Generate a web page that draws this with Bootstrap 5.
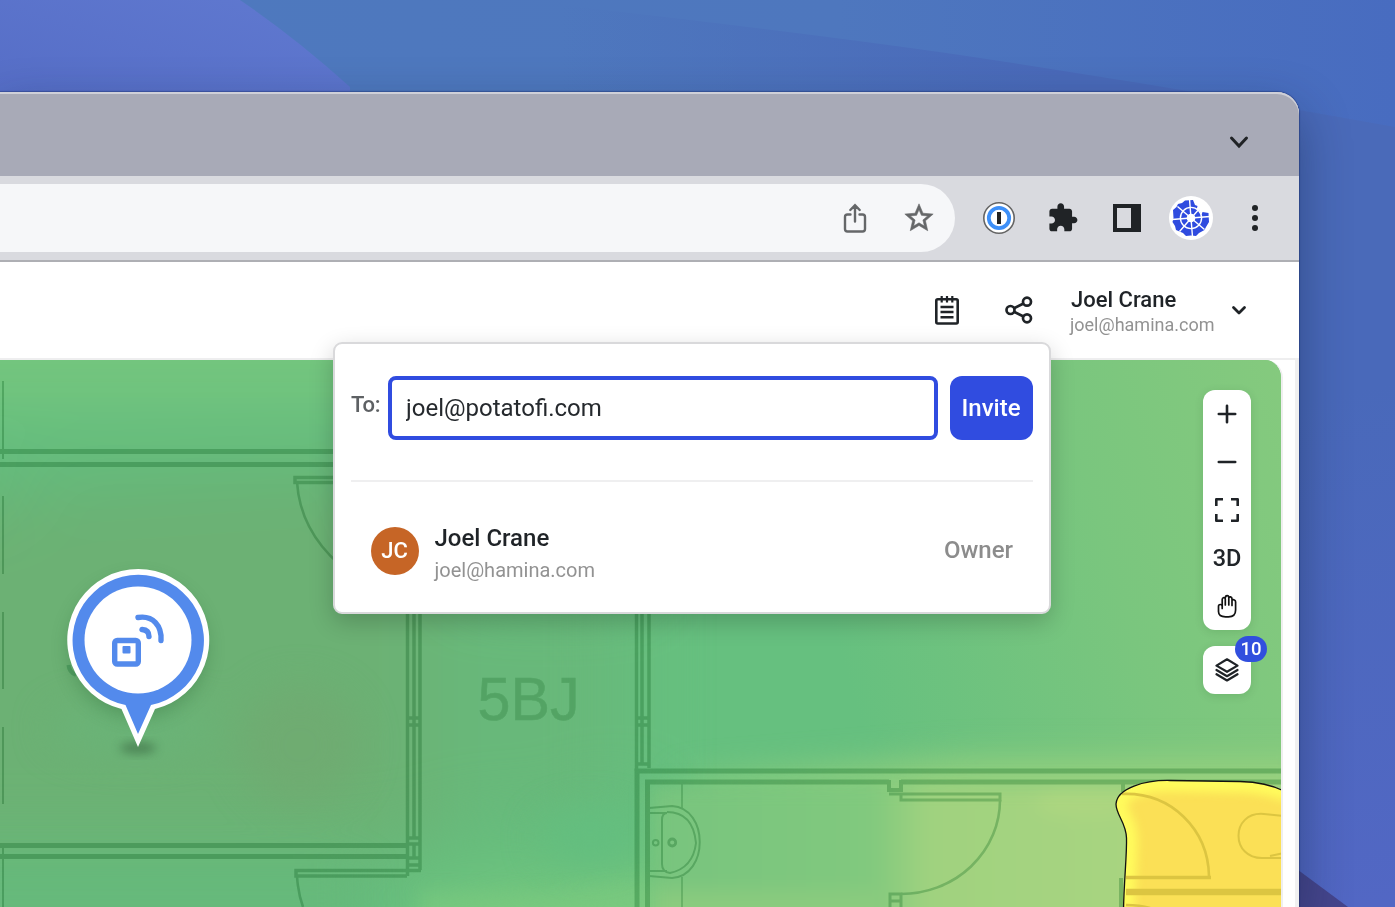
<!DOCTYPE html>
<html lang="en">
<head>
<meta charset="utf-8">
<meta name="viewport" content="width=device-width, initial-scale=1">
<title>Share project</title>
<link href="https://cdn.jsdelivr.net/npm/bootstrap@5.3.0/dist/css/bootstrap.min.css" rel="stylesheet">
<style>
body{font-family:Roboto,"Liberation Sans",sans-serif;color:#1f2327;width:1395px;height:907px;background:#4a69b9}
svg{display:block;flex:none}
filter{color-interpolation-filters:sRGB}
.wallpaper{z-index:0}
.browser{z-index:1;width:1299px;height:815px;margin-top:92px;border-top-right-radius:22px;background:#fff;box-shadow:0 0 1px 1px rgba(20,40,100,.4),0 20px 50px rgba(15,30,60,.42)}
.tabstrip{height:84px;background:#a8aab7;box-shadow:inset 0 2px 0 #cfd0d8;padding-right:38px;border-top-right-radius:22px;padding-top:16px}
.toolbar{height:86px;background:#d9dadf;border-bottom:2px solid #aeafb4;gap:20px;padding-right:22px}
.omnibox{height:68px;background:#f6f7f9;border-radius:0 34px 34px 0;gap:20px;padding-right:14px;margin-right:2px}
.slot{width:44px;height:44px}
.appbar{height:98px;border-bottom:2px solid #eeeeef;padding-right:52px}
.notes-icon{margin-right:46px}
.user-box{width:144px;margin-left:38px;margin-right:16px;padding-top:4px;white-space:nowrap}
.user-name{font-size:22px;line-height:26px;font-weight:500}
.user-mail{font-size:18px;line-height:24px;color:#929292;margin-left:-1px}
.workspace{height:547px}
.map{width:1283px;border-right:2px solid #efefef;border-top-right-radius:18px;background:#74c57e}
.gutter{width:4px;background:#f0f0f0;margin-top:-2px}
.tools{right:30px;top:30px}
.tool-stack{width:48px;border-radius:12px;box-shadow:0 2px 10px rgba(0,60,0,.12)}
.tool{width:48px;height:48px;font-size:23.5px;font-weight:500;padding:0}
.tool-3d{padding-top:2px}
.count{left:32px;top:-10px;width:32px;height:26px;font-size:18.5px;font-weight:500;background:#314fde;color:#fff;border-radius:13px;padding-top:1px}
.share-pop{z-index:5;left:333px;top:250px;width:718px;height:272px;border:2px solid #d9d9db;border-radius:9px;padding:32px 16px 0;box-shadow:0 8px 24px rgba(0,0,0,.2)}
.to-label{font-size:22px;font-weight:500;color:#5e6164;width:37px;line-height:58px;height:64px;letter-spacing:-.3px}
.invite-field{width:550px;height:64px;border:4px solid #304ce0;border-radius:8px;padding:0 14px;font-size:24px;color:#25292d}
.invite-field:focus{box-shadow:none;border-color:#304ce0}
.invite-btn{width:83px;height:64px;border-radius:12px;background:#304ce0;color:#fff;font-size:24px;font-weight:500;padding:0 1px 0 0;margin-left:12px}
.rule{height:2px;background:#efeff0;margin-top:40px}
.member{margin-top:38px;padding:0 20px}
.initials{width:48px;height:48px;background:#c66526;color:#fff;font-size:22px;font-weight:500;margin-top:7px;padding:0 1px 2px 0}
.member-text{margin-left:15.500px}
.member-name{font-size:24px;line-height:36px;font-weight:500}
.member-mail{font-size:20px;line-height:28px;color:#929292}
.member-role{font-size:24px;font-weight:500;color:#8c8c8c;line-height:36px;margin-top:12px}
.wall{fill:none;stroke:#b9d9c4;mix-blend-mode:multiply}
</style>
</head>
<body class="position-relative overflow-hidden m-0">
<svg class="wallpaper position-absolute top-0 start-0" width="1395" height="907" viewBox="0 0 1395 907">
  <defs>
    <linearGradient id="skyA" x1="0" y1="0" x2="1" y2="0"><stop offset="0" stop-color="#4e79be"/><stop offset=".6" stop-color="#4e77be"/><stop offset="1" stop-color="#486cc0"/></linearGradient>
    <linearGradient id="skyB" gradientUnits="userSpaceOnUse" x1="560" y1="0" x2="1060" y2="0"><stop offset="0" stop-color="#4a6ab9" stop-opacity="0"/><stop offset="1" stop-color="#4a6ab9"/></linearGradient>
    <linearGradient id="skyD" gradientUnits="userSpaceOnUse" x1="1300" y1="400" x2="1395" y2="900"><stop offset="0" stop-color="#4969ba"/><stop offset="1" stop-color="#5267c4"/></linearGradient>
    <linearGradient id="skyC" x1="0" y1="1" x2="1" y2="0"><stop offset="0" stop-color="#556dc6"/><stop offset="1" stop-color="#6079d0"/></linearGradient>
  </defs>
  <rect width="1395" height="907" fill="url(#skyA)"/>
  <path d="M560 5Q800 32 960 55Q1180 88 1395 127V300H560Z" fill="url(#skyB)"/>
  <rect x="1200" y="290" width="195" height="617" fill="url(#skyD)"/>
  <path d="M0 0H240Q296 38 350 87V110H0Z" fill="url(#skyC)"/>
  <path d="M1290 864L1348 907H1290Z" fill="#45458c"/>
</svg>

<main class="browser position-relative d-flex flex-column">
  <div class="tabstrip d-flex justify-content-end align-items-center">
    <div class="slot d-flex justify-content-center align-items-center">
      <svg width="20" height="14" viewBox="0 0 20 14" fill="none" stroke="#202326" stroke-width="3" stroke-linecap="round"><path d="M2.500 3L10 11L17.500 3"/></svg>
    </div>
  </div>

  <div class="toolbar d-flex align-items-center">
    <div class="omnibox flex-grow-1 d-flex align-items-center justify-content-end">
      <div class="slot d-flex justify-content-center align-items-center">
        <svg width="24" height="30" viewBox="0 0 24 30" fill="none" stroke="#656769" stroke-width="2.400" stroke-linecap="round"><path d="M7.500 11.500H4.500Q2 11.500 2 14V26Q2 28.500 4.500 28.500H19.500Q22 28.500 22 26V14Q22 11.500 19.500 11.500H16.500M12 18.500V2.500M7.300 7L12 2.300L16.700 7"/></svg>
      </div>
      <div class="slot d-flex justify-content-center align-items-center">
        <svg width="34" height="34" viewBox="0 0 24 24" fill="#656769" stroke="#656769" stroke-width=".4"><path d="M22 9.240l-7.190-.62L12 2 9.190 8.630 2 9.240l5.460 4.730L5.820 21 12 17.270 18.180 21l-1.630-7.030L22 9.240zM12 15.400l-3.760 2.270 1-4.280-3.320-2.880 4.380-.38L12 6.100l1.710 4.040 4.380.38-3.320 2.880 1 4.280L12 15.400z"/></svg>
      </div>
    </div>
    <div class="slot d-flex justify-content-center align-items-center">
      <svg width="32" height="32" viewBox="0 0 32 32"><circle cx="16" cy="16" r="15.200" fill="#fff" stroke="#646464" stroke-width="1.600"/><circle cx="16" cy="16" r="10.200" fill="#fff" stroke="#3d8ff8" stroke-width="3.800"/><rect x="14" y="10" width="4" height="12" fill="#222"/></svg>
    </div>
    <div class="slot d-flex justify-content-center align-items-center">
      <svg width="32" height="32" viewBox="0.200 0 24 24" fill="#202326"><path d="M20.500 11H19V7c0-1.100-.9-2-2-2h-4V3.500C13 2.120 11.880 1 10.500 1S8 2.120 8 3.500V5H4c-1.100 0-1.990.9-1.990 2v3.800H3.500c1.490 0 2.700 1.210 2.700 2.700s-1.210 2.700-2.700 2.700H2V20c0 1.100.9 2 2 2h3.800v-1.500c0-1.490 1.210-2.700 2.700-2.700 1.490 0 2.700 1.210 2.700 2.700V22H17c1.100 0 2-.9 2-2v-4h1.500c1.380 0 2.500-1.120 2.500-2.500S21.880 11 20.500 11z"/></svg>
    </div>
    <div class="slot d-flex justify-content-center align-items-center">
      <svg width="28" height="28" viewBox="0 0 28 28" fill="#202326" fill-rule="evenodd"><path d="M0 0H28V28H0ZM4 4V24H18V4Z"/></svg>
    </div>
    <div class="slot d-flex justify-content-center align-items-center">
      <svg width="44" height="44" viewBox="-22 -22 44 44">
        <circle r="22" fill="#fff"/>
        <path d="M2 -18L-6 -17.500L-9 -15L-13 -14L-14.500 -11L-18 -8L-17.500 0L-18.500 4L-16 8L-15 12L-8 15L-5 18L0 17.500L5 18L8 15L13.500 12L15 9L18 4L17.500 -5L11.500 -6L10.500 -3L8 -5L5.500 -8L6.500 -12L4 -13Z" fill="#2f4bdf"/>
        <circle r="10.800" fill="#2f4bdf"/>
        <g fill="none" stroke="#fff" stroke-width="1.400"><circle r="10.600"/><path d="M-1.500 -19L1.500 19M-19 1.500L19 -1.500M-13.500 -11.500L13.500 11.500M-11.500 13.500L9 -10"/></g>
        <circle r="4.300" fill="#fff"/>
      </svg>
    </div>
    <div class="slot d-flex justify-content-center align-items-center">
      <svg width="6" height="26" viewBox="0 0 6 26" fill="#202326"><circle cx="3" cy="3" r="3"/><circle cx="3" cy="13" r="3"/><circle cx="3" cy="23" r="3"/></svg>
    </div>
  </div>

  <header class="appbar d-flex align-items-center justify-content-end">
    <svg class="notes-icon" width="24" height="30" viewBox="0 0 24 30" fill="none" stroke="#1f2327" stroke-width="2.600"><rect x="1.300" y="4.300" width="21.400" height="24.200" rx="1.500"/><path d="M6.700 1V7.500M12 1V7.500M17.300 1V7.500" stroke-width="2.200"/><path d="M5.500 12H18.500M5.500 17H18.500M5.500 22.200H18.500" stroke-width="2.400"/></svg>
    <svg width="28" height="28" viewBox="0 0 28 28" fill="none" stroke="#1f2327" stroke-width="2.700"><circle cx="5.500" cy="14" r="4"/><circle cx="22" cy="5.700" r="4"/><circle cx="22" cy="22.300" r="4"/><path d="M9 12.300L18.500 7.500M9 15.700L18.500 20.500"/></svg>
    <div class="user-box">
      <div class="user-name">Joel Crane</div>
      <div class="user-mail">joel@hamina.com</div>
    </div>
    <svg width="16" height="11" viewBox="0 0 16 11" fill="none" stroke="#1f2327" stroke-width="2.800" stroke-linecap="round" stroke-linejoin="round"><path d="M2.500 2.500L8 8L13.500 2.500"/></svg>
  </header>

  <section class="workspace d-flex justify-content-between">
    <div class="map position-relative overflow-hidden">
      <svg width="1281" height="547" viewBox="0 360 1281 547">
        <defs>
          <filter id="b60" x="-50%" y="-50%" width="200%" height="200%"><feGaussianBlur stdDeviation="36"/></filter>
          <filter id="b20" x="-50%" y="-50%" width="200%" height="200%"><feGaussianBlur stdDeviation="18"/></filter>
          <filter id="b6" x="-50%" y="-50%" width="200%" height="200%"><feGaussianBlur stdDeviation="5"/></filter>
          <filter id="b12" x="-50%" y="-50%" width="200%" height="200%"><feGaussianBlur stdDeviation="9"/></filter>
          <linearGradient id="heat" gradientUnits="userSpaceOnUse" x1="650" y1="0" x2="1200" y2="-160"><stop offset="0" stop-color="#66c07f"/><stop offset=".5" stop-color="#7ac67e"/><stop offset="1" stop-color="#88cb7e"/></linearGradient>
          <linearGradient id="rooms" gradientUnits="userSpaceOnUse" x1="652" y1="0" x2="1130" y2="0"><stop offset="0" stop-color="#78c47e"/><stop offset=".46" stop-color="#81c97e"/><stop offset=".58" stop-color="#a0d27f"/><stop offset="1" stop-color="#a8d480"/></linearGradient>
          <clipPath id="zone"><path d="M1123.500 910C1124 880 1127 855 1126.500 838C1126 822 1116 815 1116 804C1117 788 1145 780 1170 780.500L1240 781.500C1260 782 1272 785 1284 791V910Z"/></clipPath>
        </defs>
        <rect y="360" width="1281" height="547" fill="url(#heat)"/>
        <g filter="url(#b60)">
          <rect x="-120" y="240" width="600" height="175" fill="#74c57e"/>
          <rect x="-120" y="418" width="600" height="70" fill="#62bc7e"/>
          <path d="M-120 500L330 468L470 540L480 830L400 855H-120Z" fill="#6cb174"/>
          <path d="M430 580H630V800L560 830H430Z" fill="#68b87a"/>
          <rect x="-120" y="870" width="500" height="130" fill="#65ba7c"/>
          <path d="M440 905L700 870V1000H400Z" fill="#7cca7e"/>
        </g>
        <g filter="url(#b20)">
          <ellipse cx="300" cy="745" rx="60" ry="60" fill="#71aa70" opacity=".7"/>
          <ellipse cx="135" cy="728" rx="85" ry="25" fill="#6ab377"/>
          <rect x="-40" y="868" width="400" height="60" fill="#67b97b" opacity=".7"/>
          <ellipse cx="590" cy="838" rx="50" ry="26" fill="#63be7f"/>
          <path d="M680 785L960 762H1320V800H700Z" fill="#9ad27e"/>
        </g>
        <g filter="url(#b12)">
          <path d="M650 785H1330V960H650Z" fill="url(#rooms)"/>
          <path d="M420 890L560 895L660 880V940H420Z" fill="#7ac97e" opacity=".6"/>
          <path d="M655 890H880V930H655Z" fill="#8acb7e"/>
          <ellipse cx="1085" cy="803" rx="50" ry="14" fill="#add680"/>
        </g>

        <g class="wall">
          <g stroke-width="5">
            <path d="M0 451.500H640M0 464.500H406M0 845.500H406M0 856.500H406"/>
            <path d="M637 907V771H1281M647.500 907V782H889M901 782H1281"/>
            <path d="M889 780V790H901V780" stroke-width="4"/>
          </g>
          <g stroke-width="3.500">
            <path d="M407.500 464V876M420 464V870M636.500 464V771M649 464V768"/>
            <path d="M414 614V838M414 844V858M642 614V764"/>
            <path d="M407 718H421M407 725H421M407 838H421M407 844H421M407 858H421M407 865H421M636 718H650M636 725H650M636 764H650"/>
            <path d="M340 477.500H295V482.500H340M407 876H296V870.500H406M407 870.500H421"/>
            <path d="M901 794H1000V800H901V794M889 794H901M890 907V894H901V907M890 901H901" stroke-width="3"/>
          </g>
          <g stroke-width="2.600">
            <path d="M297 482Q300 530 340 565M297 876Q298 893 303 907M1000 800A99 94 0 0 1 901 894"/>
            <path d="M3 381V459M3 496V574M3 612V689M3 727V804M3 843V907" stroke-width="2"/>
          </g>
          <g stroke-width="2">
            <path d="M682 784V808M682 877V907" stroke-width="1.600"/>
            <path d="M649 808L672 806C709 808 709 876 672 878L649 876M649 813H667Q662 813 662 820V864Q662 872 670 873Q693 868 696 843Q693 812 667 812M649 871H667"/>
            <circle cx="655.700" cy="842.700" r="2.800"/><circle cx="672.200" cy="842.500" r="3.500" stroke-width="2.800"/>
          </g>
          <path d="M1123 782V792M1121 907V878" stroke-width="4"/>
          <text x="477.500" y="720" font-family="Liberation Sans, Arial, sans-serif" font-size="62" textLength="102" lengthAdjust="spacingAndGlyphs" stroke="#cfe6d5" stroke-width=".6" fill="#cae2d0">5BJ</text>
        </g>

        <g clip-path="url(#zone)">
          <rect x="1110" y="775" width="180" height="140" fill="#fbe056"/>
          <path d="M1123.500 910C1124 880 1127 855 1126.500 838C1126 822 1116 815 1116 804C1117 788 1145 780 1170 780.500L1240 781.500C1260 782 1272 785 1290 791" fill="none" stroke="#fffb5c" stroke-width="22" filter="url(#b6)"/>
          <g fill="none" stroke="#dcc541">
            <path d="M1122 794C1172 792 1208 830 1209 876" stroke-width="2.600"/>
            <path d="M1126 877.500H1211" stroke-width="3.600"/>
            <path d="M1126 892H1284" stroke-width="6.500"/>
            <path d="M1126 905Q1140 905 1150 908" stroke-width="2.400"/>
            <path d="M1284 816L1264 814C1230 811 1230 860 1264 858L1284 858M1270 856L1284 853" stroke-width="2"/>
          </g>
        </g>
        <path d="M1123.500 910C1124 880 1127 855 1126.500 838C1126 822 1116 815 1116 804C1117 788 1145 780 1170 780.500L1240 781.500C1260 782 1272 785 1284 791" fill="none" stroke="#111" stroke-width="1.300"/>

        <!-- access point pin -->
        <path d="M68.500 665Q69 672 76 675" stroke="#4f9b5f" stroke-width="4" fill="none"/>
        <ellipse cx="138" cy="748" rx="18" ry="6" fill="#3b6a43" opacity=".6" filter="url(#b6)"/>
        <circle cx="138" cy="648" r="69" fill="#2d6a38" opacity=".35" filter="url(#b12)"/>
        <path d="M121.500 709A71 71 0 1 1 155 709L138 747Z" fill="#fff"/>
        <path d="M125.500 705A65.700 65.700 0 1 1 151 705L138 734Z" fill="#538aec"/>
        <circle cx="138" cy="640" r="53.500" fill="#fff"/>
        <g fill="none" stroke="#538aec" stroke-width="5.400" stroke-linecap="round"><rect x="114.700" y="640.500" width="23.600" height="23.500" rx="2.500"/><path d="M142 629.500Q149 630 149 636.500M138 617.500C153 615 162 626 161 640.500"/></g>
        <rect x="122.500" y="646" width="8" height="7.500" rx="1" fill="#538aec"/>
      </svg>

      <div class="tools position-absolute d-flex flex-column gap-3">
        <div class="tool-stack bg-white d-flex flex-column">
          <button class="tool btn border-0 d-flex align-items-center justify-content-center"><svg width="20" height="20" viewBox="0 0 20 20" stroke="#1f2327" stroke-width="2.600" stroke-linecap="round"><path d="M10 1.800V18.200M1.800 10H18.200"/></svg></button>
          <button class="tool btn border-0 d-flex align-items-center justify-content-center"><svg width="20" height="20" viewBox="0 0 20 20" stroke="#1f2327" stroke-width="2.600" stroke-linecap="round"><path d="M1.800 10H18.200"/></svg></button>
          <button class="tool btn border-0 d-flex align-items-center justify-content-center"><svg width="24" height="24" viewBox="0 0 24 24" fill="none" stroke="#1f2327" stroke-width="2.600" stroke-linejoin="round"><path d="M1.300 8V1.300H8M16 1.300H22.700V8M22.700 16V22.700H16M8 22.700H1.300V16"/></svg></button>
          <button class="tool tool-3d btn border-0 d-flex align-items-center justify-content-center">3D</button>
          <button class="tool btn border-0 d-flex align-items-center justify-content-center"><svg width="20" height="24" viewBox="0 0 20 24" fill="none" stroke="#111" stroke-width="1.700" stroke-linecap="round" stroke-linejoin="round"><path d="M5.200 14.500V5.500Q5.200 3.800 6.800 3.500Q8.300 3.500 8.300 5.200V11M8.300 4Q8.300 1.600 10.200 1.600Q11.800 1.600 11.800 3.800V11M11.800 4Q12.200 2.700 13.600 2.900Q15 3.200 15 5V11.500M15 6.300Q16 5.300 17.400 6Q18.600 6.500 18.600 8V16Q18.600 22.800 11.500 22.800H8.500Q1.500 22.800 1.500 17.500V12.500Q1.500 10.500 3.300 10.500Q5.200 10.500 5.200 12.500"/></svg></button>
        </div>
        <div class="tool-stack bg-white position-relative">
          <button class="tool btn border-0 d-flex align-items-center justify-content-center"><svg width="24" height="24" viewBox="0 0 24 24" fill="none" stroke="#1f2327" stroke-width="2.200" stroke-linejoin="round" stroke-linecap="round"><path d="M12 1.300L22.500 7.600L12 13.800L1.500 7.600ZM1.500 12L12 18.200L22.500 12M1.500 16.200L12 22.500L22.500 16.200"/></svg></button>
          <span class="count position-absolute d-flex align-items-center justify-content-center">10</span>
        </div>
      </div>
    </div>
    <div class="gutter"></div>
  </section>

  <div class="share-pop position-absolute bg-white">
    <form class="d-flex m-0">
      <label class="to-label" for="to">To:</label>
      <input id="to" class="invite-field form-control" type="text" value="joel@potatofi.com">
      <button class="invite-btn btn" type="button">Invite</button>
    </form>
    <div class="rule"></div>
    <div class="member d-flex">
      <div class="initials rounded-circle d-flex align-items-center justify-content-center">JC</div>
      <div class="member-text">
        <div class="member-name">Joel Crane</div>
        <div class="member-mail">joel@hamina.com</div>
      </div>
      <div class="member-role ms-auto">Owner</div>
    </div>
  </div>
</main>
<script src="https://cdn.jsdelivr.net/npm/bootstrap@5.3.0/dist/js/bootstrap.bundle.min.js"></script>
</body>
</html>
